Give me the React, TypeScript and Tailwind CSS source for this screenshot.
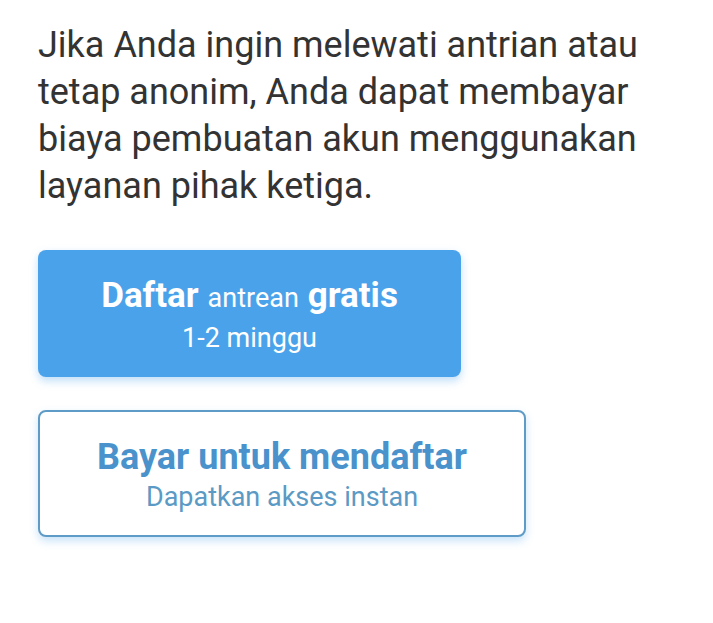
export default function App() {
  return (
    <div
      className="min-h-[623px] w-[713px] bg-white pl-[38px] pt-[22px]"
      style={{ fontFamily: "Roboto, 'Noto Sans', sans-serif" }}
    >
      <p className="w-[640px] text-[36px] leading-[47px] text-[#333333]">
        Jika Anda ingin melewati antrian atau tetap anonim, Anda dapat membayar biaya pembuatan akun menggunakan layanan pihak ketiga.
      </p>

      <button className="mt-[40px] flex h-[127px] w-[423px] flex-col items-center justify-center rounded-[8px] bg-[#4aa3ea] pt-[2px] text-white shadow-[0_4px_8px_rgba(74,163,234,0.35)]">
        <span className="flex items-baseline gap-[9px] leading-[42px]">
          <span className="text-[35px] font-bold">Daftar</span>
          <span className="text-[27px]">antrean</span>
          <span className="text-[35px] font-bold">gratis</span>
        </span>
        <span className="mt-[3px] text-[27px] leading-[32px]">1-2 minggu</span>
      </button>

      <button className="mt-[33px] flex h-[127px] w-[488px] flex-col items-center justify-center rounded-[8px] border-2 border-[#5e9bc6] bg-white pt-[2px] shadow-[0_4px_8px_rgba(74,163,234,0.3)]">
        <span className="text-[36px] font-bold leading-[42px] text-[#4a92cc]">Bayar untuk mendaftar</span>
        <span className="mt-[3px] text-[27px] leading-[32px] text-[#5b9ac4]">Dapatkan akses instan</span>
      </button>
    </div>
  );
}
